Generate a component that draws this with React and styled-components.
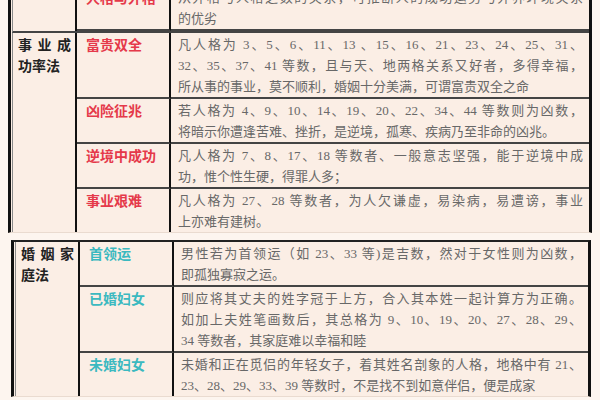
import React from 'react';
import styled, { createGlobalStyle } from 'styled-components';

const GlobalStyle = createGlobalStyle`
  html, body {
    margin: 0;
    padding: 0;
    background: #fdf5ef;
    overflow: hidden;
  }
  body {
    font-family: "Liberation Serif", "Noto Sans CJK SC", serif;
  }
`;

const Page = styled.div`
  width: 600px;
  height: 400px;
  overflow: hidden;
`;

const Scroller = styled.div`
  margin-top: -14px;
  padding-left: 8px;
  display: flex;
  flex-direction: column;
  gap: 7px;
`;

const Table = styled.div`
  width: ${p => p.$width}px;
  margin-left: ${p => p.$shift || 0}px;
  background: #fbeee5;
  border-left: 3px solid #111;
  border-right: 3px solid #111;
  border-top: ${p => (p.$top ? '2px solid #222' : 'none')};
  border-bottom: 1px solid #eadbd0;
  padding-left: 1px;
  box-sizing: border-box;
`;

const Section = styled.div`
  display: grid;
  grid-template-columns: 64px 94px 1fr;
  border-bottom: ${p => (p.$last ? 'none' : '2px solid #444')};
  border-left: 1px solid #8a8a8a;
`;

const Category = styled.div`
  grid-column: 1;
  grid-row: 1 / span ${p => p.$span};
  border-right: 2px solid #111;
  padding: 1px 4px 0 5px;
  font-family: "Noto Sans CJK SC", sans-serif;
  font-weight: 700;
  font-size: 14px;
  line-height: 21px;
  color: #222;
`;

const CatLine = styled.div`
  text-align: ${p => (p.$full ? 'justify' : 'left')};
  text-align-last: ${p => (p.$full ? 'justify' : 'left')};
`;

const Name = styled.div`
  grid-column: 2;
  border-right: 2px solid #111;
  border-bottom: ${p => (p.$last ? 'none' : '2px solid #444')};
  padding: 1px 4px 0 9px;
  font-family: "Noto Sans CJK SC", sans-serif;
  font-weight: 700;
  font-size: 14px;
  line-height: 21px;
  color: ${p => p.$color};
`;

const Text = styled.div`
  grid-column: 3;
  border-bottom: ${p => (p.$last ? 'none' : '2px solid #444')};
  padding: 1px 6px 0 7px;
  font-size: 13px;
  line-height: 21px;
  color: #686868;
`;

const Line = styled.div`
  white-space: nowrap;
  text-align: ${p => (p.$full ? 'justify' : 'left')};
  text-align-last: ${p => (p.$full ? 'justify' : 'left')};
`;

const RED = '#e5394a';
const TEAL = '#3bb9c0';

const sections = [
  {
    table: 1,
    category: [],
    color: RED,
    rows: [
      {
        name: '人格与外格',
        lines: ['从外格与人格之数的关系，可推断人的成功运势与外界环境关系', '的优劣']
      }
    ]
  },
  {
    table: 1,
    category: ['事业成', '功率法'],
    color: RED,
    last: true,
    rows: [
      {
        name: '富贵双全',
        lines: [
          '凡人格为 3、5、6、11、13 、15、16、21、23、24、25、31、',
          '32、35、37、41 等数，且与天、地两格关系又好者，多得幸福，',
          '所从事的事业，莫不顺利，婚姻十分美满，可谓富贵双全之命'
        ]
      },
      {
        name: '凶险征兆',
        lines: [
          '若人格为 4、9、10、14、19、20、22、34、44 等数则为凶数，',
          '将暗示你遭逢苦难、挫折，是逆境，孤寒、疾病乃至非命的凶兆。'
        ]
      },
      {
        name: '逆境中成功',
        lines: [
          '凡人格为 7、8、17、18 等数者、一般意志坚强，能于逆境中成',
          '功，惟个性生硬，得罪人多；'
        ]
      },
      {
        name: '事业艰难',
        lines: [
          '凡人格为 27、28 等数者，为人欠谦虚，易染病，易遭谤，事业',
          '上亦难有建树。'
        ]
      }
    ]
  },
  {
    table: 2,
    category: ['婚姻家', '庭法'],
    color: TEAL,
    last: true,
    rows: [
      {
        name: '首领运',
        lines: [
          '男性若为首领运（如 23、33 等)是吉数，然对于女性则为凶数，',
          '即孤独寡寂之运。'
        ]
      },
      {
        name: '已婚妇女',
        lines: [
          '则应将其丈夫的姓字冠于上方，合入其本姓一起计算方为正确。',
          '如加上夫姓笔画数后，其总格为 9、10、19、20、27、28、29、',
          '34 等数者，其家庭难以幸福和睦'
        ]
      },
      {
        name: '未婚妇女',
        lines: [
          '未婚和正在觅侣的年轻女子，着其姓名剖象的人格，地格中有 21、',
          '23、28、29、33、39 等数时，不是找不到如意伴侣，便是成家'
        ]
      }
    ]
  }
];

const SectionBlock = ({ section }) => (
  <Section $last={section.last}>
    <Category $span={section.rows.length}>
      {section.category.map((c, i) => (
        <CatLine key={c} $full={i < section.category.length - 1}>
          {c}
        </CatLine>
      ))}
    </Category>
    {section.rows.map((row, ri) => {
      const lastRow = section.last && ri === section.rows.length - 1;
      return (
        <React.Fragment key={row.name}>
          <Name $color={section.color} $last={lastRow}>
            {row.name}
          </Name>
          <Text $last={lastRow}>
            {row.lines.map((l, li) => (
              <Line key={li} $full={li < row.lines.length - 1}>
                {l}
              </Line>
            ))}
          </Text>
        </React.Fragment>
      );
    })}
  </Section>
);

const App = () => (
  <Page>
    <GlobalStyle />
    <Scroller>
      <Table $width={584}>
        {sections
          .filter(s => s.table === 1)
          .map((s, i) => (
            <SectionBlock key={i} section={s} />
          ))}
      </Table>
      <Table $width={580} $shift={3} $top>
        {sections
          .filter(s => s.table === 2)
          .map((s, i) => (
            <SectionBlock key={i} section={s} />
          ))}
      </Table>
    </Scroller>
  </Page>
);

export default App;
